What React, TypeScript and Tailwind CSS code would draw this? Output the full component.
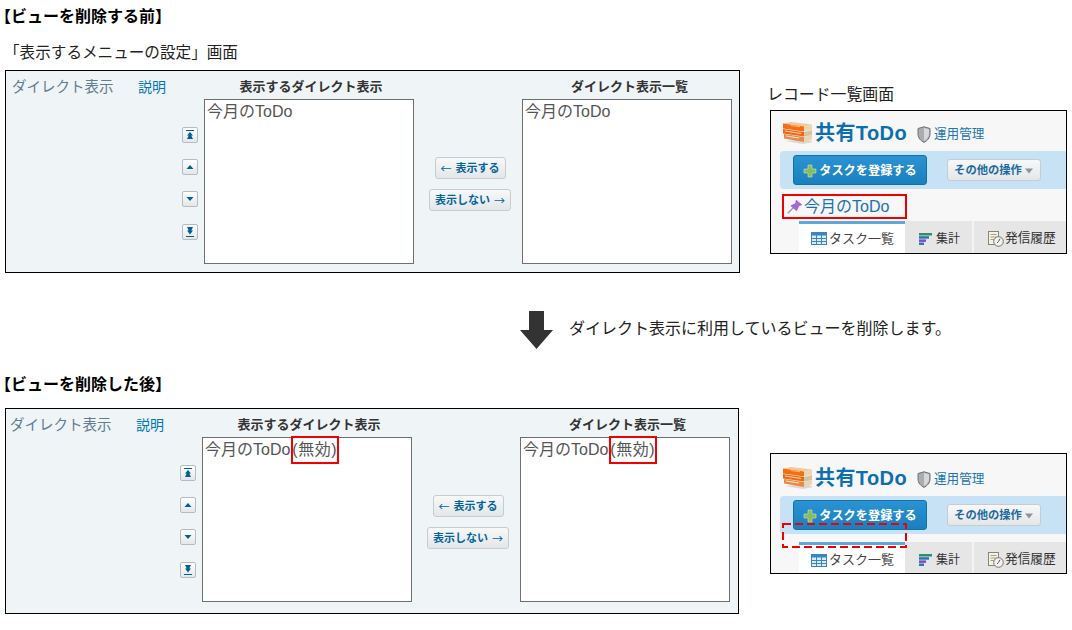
import React from "react";

const FONT = "font-['Liberation_Sans','Noto_Sans_CJK_JP',sans-serif]";

function Arrow({ kind }: { kind: "top" | "up" | "down" | "bottom" }) {
  const c = "#005f96";
  return (
    <svg width="10" height="10" viewBox="0 0 10 10">
      {kind === "top" && (
        <>
          <rect x="1" y="0" width="8" height="1" fill={c} />
          <path d="M5 2 L8 5.5 H6.5 V6 L8 9 H2 L3.5 6 V5.5 H2 Z" fill={c} />
        </>
      )}
      {kind === "up" && <path d="M5 3 L8.5 7 H1.5 Z" fill={c} />}
      {kind === "down" && <path d="M1.5 3 H8.5 L5 7 Z" fill={c} />}
      {kind === "bottom" && (
        <>
          <path d="M2 0 H8 L6.5 3 V3.5 H8 L5 7.5 L2 3.5 H3.5 V3 Z" fill={c} />
          <rect x="1" y="9" width="8" height="1" fill={c} />
        </>
      )}
    </svg>
  );
}

function IconButton({ kind }: { kind: "top" | "up" | "down" | "bottom" }) {
  return (
    <div className="flex h-4 w-4 items-center justify-center rounded-[2px] border border-[#b5bcc2] bg-linear-to-b from-white to-[#e4e6e8]">
      <Arrow kind={kind} />
    </div>
  );
}

function MoveButton({ wide, children }: { wide?: boolean; children: React.ReactNode }) {
  return (
    <div
      className={
        (wide ? "w-[82px] " : "w-[71px] ") +
        "flex h-[22px] items-center justify-center whitespace-nowrap rounded-[3px] border border-[#c5ccd2] bg-linear-to-b from-[#f8f8f8] to-[#e4e6e8] text-[11px] font-bold text-[#00649f]"
      }
    >
      {children}
    </div>
  );
}

function ListBox({ disabled }: { disabled?: boolean }) {
  return (
    <div className="h-[165px] w-[210px] border border-[#6f6f6f] bg-white pl-[2px] pt-[1px] text-[16px] leading-[22px] text-[#555]">
      今月のToDo
      {disabled && (
        <span className="relative ml-[2px] inline-block tracking-[0.5px]">
          (無効)
          <span className="absolute -left-[1px] -right-[2px] -top-[3px] -bottom-[3px] border-2 border-[#f00000]" />
        </span>
      )}
    </div>
  );
}

function Panel({ after }: { after?: boolean }) {
  return (
    <div
      className={
        after
          ? "ml-[5px] flex h-[206px] w-[734px] border border-black bg-[#eff4f7] pl-[3px]"
          : "ml-[5px] flex h-[203px] w-[735px] border border-black bg-[#eff4f7] pl-[5px]"
      }
    >
      <div className="w-[193px]">
        <div className="flex h-7 items-center pl-[1px] pt-[5px]">
          <span className="w-[126px] text-[14.5px] text-[#5f7c91]">ダイレクト表示</span>
          <span className="text-[14px] text-[#0077b8]">説明</span>
        </div>
        <div className="mt-7 flex flex-col items-end gap-4 pr-[6px]">
          <IconButton kind="top" />
          <IconButton kind="up" />
          <IconButton kind="down" />
          <div className="mt-[1px]"><IconButton kind="bottom" /></div>
        </div>
      </div>
      <div className="w-[210px]">
        <div className="flex h-7 items-center justify-center pl-[4px] pt-[4px] text-[13px] font-bold text-[#333]">表示するダイレクト表示</div>
        <ListBox disabled={after} />
      </div>
      <div className="flex w-[108px] flex-col items-center gap-[10px] pl-[4px] pt-[86px]">
        <MoveButton>
          <span className="font-['Noto_Sans_CJK_JP'] font-normal">←</span>
          <span className="ml-[4px]">表示する</span>
        </MoveButton>
        <MoveButton wide>
          <span className="mr-[4px]">表示しない</span>
          <span className="font-['Noto_Sans_CJK_JP'] font-normal">→</span>
        </MoveButton>
      </div>
      <div className="w-[210px]">
        <div className="flex h-7 items-center justify-center pl-[5px] pt-[4px] text-[13px] font-bold text-[#333]">ダイレクト表示一覧</div>
        <ListBox disabled={after} />
      </div>
    </div>
  );
}

function Logo() {
  return (
    <svg width="30" height="22" viewBox="0 0 30 22">
      <path d="M2 19 L20 22 L30 20 L24 17 Z" fill="#bdb8ac" opacity="0.5" />
      <path d="M0 1.5 L8 0 L29 2.5 L21 4.5 Z" fill="#f6c79c" />
      <path d="M0 1.5 L21 4.5 V9.5 L0 6.5 Z" fill="#f46f12" />
      <path d="M21 4.5 L29 2.5 V7.5 L21 9.5 Z" fill="#e9d7b4" />
      <path d="M0 7 L21 10 V14.5 L0 11.5 Z" fill="#ef6a16" />
      <path d="M21 10 L29 8 V13 L21 14.8 Z" fill="#d8c49c" />
      <path d="M1 12 L21 15 V20 L1 16.5 Z" fill="#e88a4a" />
      <path d="M21 15 L29 13 V17.5 L21 20 Z" fill="#e6d6b8" />
      <path d="M2 8.5 L18 11 V12 L2 9.6 Z" fill="#fbd8b4" />
      <path d="M3 13.5 L16 15.6 V16.6 L3 14.6 Z" fill="#f8e6cf" />
      <path d="M8 3 L17 4.2 V5.2 L8 4 Z" fill="#ffb273" />
    </svg>
  );
}

function Shield() {
  return (
    <svg width="14" height="17" viewBox="0 0 14 17">
      <path d="M7 0.8 L13 2.5 V8 C13 12 10 15 7 16.4 C4 15 1 12 1 8 V2.5 Z" fill="#a9adb0" stroke="#6e7276" strokeWidth="1" />
      <path d="M7 2 V15 C9.5 13.6 12 11 12 8 V3.2 Z" fill="#d5d7d9" />
    </svg>
  );
}

function Plus() {
  return (
    <svg width="14" height="14" viewBox="0 0 14 14">
      <path d="M5 1 H9 V5 H13 V9 H9 V13 H5 V9 H1 V5 H5 Z" fill="#86bd5c" stroke="#cfe5b5" strokeWidth="0.6" />
    </svg>
  );
}

function Pin() {
  return (
    <svg width="16" height="15" viewBox="0 0 16 15">
      <path d="M0.8 14.2 L6.5 8.5" stroke="#9a94b0" strokeWidth="1.3" />
      <path d="M3.8 6.8 L8.6 4.6 L9.2 1.2 L14.8 5.8 L12 6.6 L9.6 11.8 Z" fill="#a866d6" stroke="#8a4cb8" strokeWidth="0.5" />
    </svg>
  );
}

function TableIcon() {
  return (
    <svg width="16" height="13" viewBox="0 0 16 13">
      <rect x="0.5" y="0.5" width="15" height="12" fill="#dcebf5" stroke="#3a87bb" />
      <rect x="0.5" y="0.5" width="15" height="3" fill="#3a87bb" />
      <path d="M0.5 6.5 H15.5 M0.5 9.5 H15.5 M5.5 3 V12.5 M10.5 3 V12.5" stroke="#3a87bb" strokeWidth="1" />
    </svg>
  );
}

function BarsIcon() {
  return (
    <svg width="13" height="12" viewBox="0 0 13 12">
      <rect x="0" y="0" width="13" height="2.5" fill="#2f8f6a" />
      <rect x="0" y="3.2" width="10" height="2.5" fill="#2577b5" />
      <rect x="0" y="6.4" width="7" height="2.5" fill="#7a4fc0" />
      <rect x="0" y="9.5" width="5" height="2.5" fill="#2a7ab0" />
    </svg>
  );
}

function HistoryIcon() {
  return (
    <svg width="16" height="16" viewBox="0 0 16 16">
      <rect x="0.5" y="0.5" width="10" height="13" fill="#f4f1e6" stroke="#8a8470" />
      <path d="M2.5 3.5 H8.5 M2.5 6 H8.5 M2.5 8.5 H6" stroke="#a5a08c" />
      <circle cx="10.5" cy="10.5" r="4.8" fill="#f2f2f2" stroke="#77746a" />
      <path d="M10.5 10.5 L12 7.8 M10.5 10.5 L9 12" stroke="#55534c" />
    </svg>
  );
}

function RecordCard({ after }: { after?: boolean }) {
  return (
    <div className="relative w-[297px] border border-black bg-[#f7f7f7]">
      <div className={(after ? "h-[42px] pt-[6px] " : "h-[40px] pt-[4px] ") + "flex items-center pl-[12px]"}>
        <Logo />
        <span className="ml-[2px] text-[20px] font-bold tracking-[0.4px] text-[#0b6fb0]">共有ToDo</span>
        <span className="ml-[10px] mt-[2px]"><Shield /></span>
        <span className="ml-[3px] mt-[2px] text-[12.6px] text-[#2276b0]">運用管理</span>
      </div>
      <div className="ml-[9px] flex h-[38px] items-center rounded-l-[4px] bg-[#c6e2f4] pl-[13px]">
        <div className="flex h-[30px] w-[134px] items-center justify-center rounded-[3px] border border-[#1470a8] bg-linear-to-b from-[#2a93d4] to-[#1a7fbf] pt-[2px] text-[12.2px] font-bold text-white">
          <Plus />
          <span className="ml-[2px]">タスクを登録する</span>
        </div>
        <div className="ml-[20px] flex h-[22px] w-[94px] items-center justify-center rounded-[3px] border border-[#c5ccd2] bg-linear-to-b from-[#f8f8f8] to-[#e4e6e8] pt-[1px] text-[11.3px] font-bold text-[#1c6aa0]">
          その他の操作
          <svg className="ml-[2px]" width="10" height="6" viewBox="0 0 10 6"><path d="M1 0.5 H9 L5 5.5 Z" fill="#8d949a" /></svg>
        </div>
      </div>
      {after ? (
        <div className="h-2" />
      ) : (
        <div className="h-[32px] pl-[11px] pt-[5px]">
          <div className="flex h-[25px] w-[125px] items-center border-2 border-[#f00000] pl-[3px] text-[16px] text-[#1a72b5]">
            <Pin />
            <span className="ml-[1px]">今月のToDo</span>
          </div>
        </div>
      )}
      <div className={(after ? "h-[31px] pb-0 " : "h-[32px] ") + "ml-[28px] flex bg-[#e6e6e6]"}>
        <div className={(after ? "pt-[2px] " : "") + "flex w-[106px] items-center border-t-[3px] border-[#5ba9d9] bg-white pl-[12px] text-[13px] text-[#444]"}>
          <TableIcon />
          <span className="ml-[2px]">タスク一覧</span>
        </div>
        <div className={(after ? "pt-[5px] " : "pt-[3px] ") + "flex w-[69px] items-center border-r-2 border-[#f4f4f4] pl-[14px] text-[12px] text-[#333]"}>
          <BarsIcon />
          <span className="ml-[4px]">集計</span>
        </div>
        <div className={(after ? "pt-[5px] " : "pt-[3px] ") + "flex flex-1 items-center pl-[14px] text-[12.7px] text-[#333]"}>
          <HistoryIcon />
          <span className="ml-[1px]">発信履歴</span>
        </div>
      </div>
      {after && (
        <svg className="absolute left-[11px] top-[69px]" width="125" height="25" viewBox="0 0 125 25">
          <rect x="1" y="1" width="123" height="23" fill="none" stroke="#f00000" strokeWidth="2" strokeDasharray="8 4" />
        </svg>
      )}
    </div>
  );
}

function SectionTitle({ children }: { children: React.ReactNode }) {
  return (
    <div className="pl-[3px] text-[16px] font-bold leading-[18px]">
      <span className="[font-feature-settings:'halt']">【</span>
      {children}
      <span className="[font-feature-settings:'halt']">】</span>
    </div>
  );
}

export default function App() {
  return (
    <div className={`${FONT} h-[630px] w-[1072px] overflow-hidden bg-white pt-[8px] text-black`}>
      <SectionTitle>ビューを削除する前</SectionTitle>
      <div className="mt-[18px] pl-[4px] text-[15.6px] leading-[18px] text-[#222]">「表示するメニューの設定」画面</div>
      <div className="mt-[8px] flex items-start">
        <Panel />
        <div className="ml-[27px] mt-[14px]">
          <div className="h-[26px] pt-[1px] text-[15.9px] leading-[20px] text-[#222]">レコード一覧画面</div>
          <div className="ml-[3px]"><RecordCard /></div>
        </div>
      </div>
      <div className="ml-[520px] mt-[38px] flex h-[38px] items-center">
        <svg width="33" height="38" viewBox="0 0 33 38"><path d="M9 0 H24 V19 H33 L16.5 38 L0 19 H9 Z" fill="#333" /></svg>
        <span className="ml-[16px] -mt-[2px] text-[16px] text-[#222]">ダイレクト表示に利用しているビューを削除します。</span>
      </div>
      <div className="mt-[27px]"><SectionTitle>ビューを削除した後</SectionTitle></div>
      <div className="mt-[14px] flex items-start">
        <Panel after />
        <div className="ml-[31px] mt-[45px]"><RecordCard after /></div>
      </div>
    </div>
  );
}
